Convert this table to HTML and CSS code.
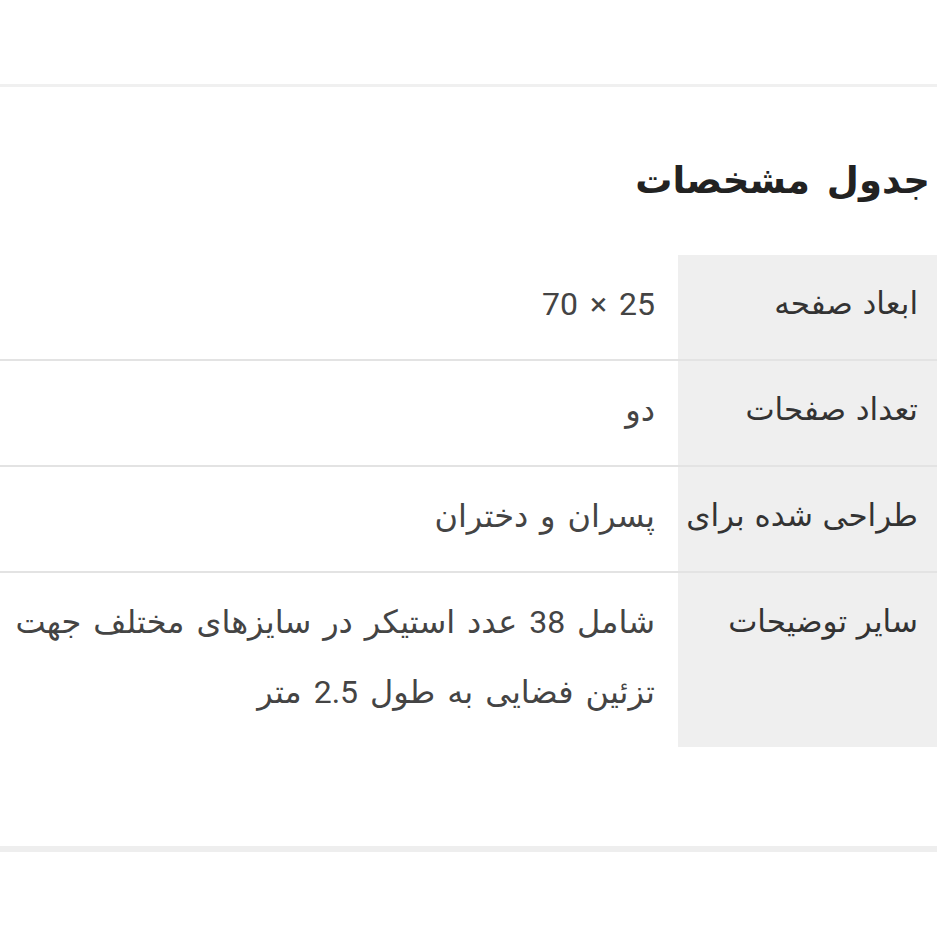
FILE: index.html
```html
<!DOCTYPE html>
<html lang="fa" dir="rtl">
<head>
<meta charset="utf-8">
<title>جدول مشخصات</title>
<link rel="stylesheet" href="styles.css">
</head>
<body>
<div class="topbar"></div>
<section class="specs">
  <h2 class="specs-title">جدول مشخصات</h2>
  <table class="specs-table">
    <colgroup>
      <col class="col-label">
      <col class="col-value">
    </colgroup>
    <tbody>
      <tr>
        <th class="label">ابعاد صفحه</th>
        <td class="value">25 × 70</td>
      </tr>
      <tr>
        <th class="label">تعداد صفحات</th>
        <td class="value">دو</td>
      </tr>
      <tr>
        <th class="label">طراحی شده برای</th>
        <td class="value">پسران و دختران</td>
      </tr>
      <tr>
        <th class="label">سایر توضیحات</th>
        <td class="value">شامل 38 عدد استیکر در سایزهای مختلف جهت تزئین فضایی به طول 2.5 متر</td>
      </tr>
    </tbody>
  </table>
</section>
<div class="bottombar"></div>
</body>
</html>
```
FILE: styles.css
```css
html, body {
  margin: 0;
  padding: 0;
  background: #ffffff;
}
body {
  font-family: Roboto, "DejaVu Sans", sans-serif;
  color: #333;
  direction: rtl;
}
.topbar {
  height: 84px;
  border-bottom: 3px solid #f0f0f0;
}
.specs {
  padding-top: 66px;
  padding-bottom: 99px;
}
.specs-title {
  margin: 0 7px 0 0;
  font-family: "DejaVu Sans", sans-serif;
  font-weight: bold;
  font-size: 37px;
  line-height: 56px;
  word-spacing: 4px;
  color: #222;
}
.specs-table {
  margin-top: 46px;
  width: 100%;
  border-collapse: collapse;
  table-layout: fixed;
}
.col-label {
  width: 259px;
}
.specs-table tr + tr .label,
.specs-table tr + tr .value {
  border-top: 2px solid #e3e3e3;
}
.label {
  background: #efefef;
  text-align: right;
  vertical-align: top;
  font-weight: normal;
  font-size: 31px;
  line-height: 70px;
  word-spacing: 2px;
  white-space: nowrap;
  color: #333;
  padding: 14px 19px 20px 0;
}
.value {
  text-align: right;
  vertical-align: top;
  font-size: 32px;
  line-height: 70px;
  word-spacing: 4px;
  color: #444;
  padding: 14px 23px 20px 0;
}
.bottombar {
  height: 6px;
  background: #eeeeee;
}
```
